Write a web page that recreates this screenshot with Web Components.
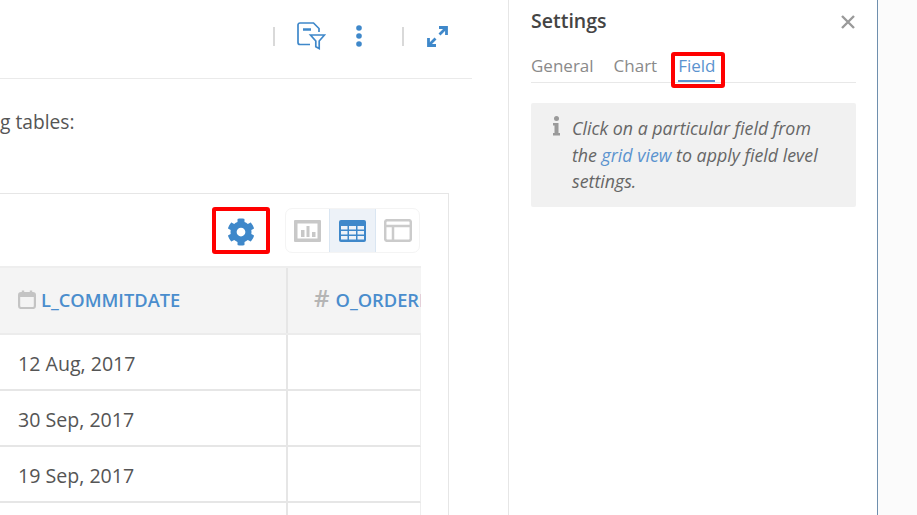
<!doctype html>
<html>
<head>
<meta charset="utf-8">
<style>
	html, body { margin: 0; height: 100%; background: #fff; overflow: hidden }
	body { font-family: "Open Sans", "Liberation Sans", sans-serif; color: #555 }
</style>
</head>
<body>
<app-shell>
	<main-view slot="main">
		<top-bar></top-bar>
		<p-line>g tables:</p-line>
		<data-card>
			<grid-head slot="head" kind="date" name="L_COMMITDATE"></grid-head>
			<grid-head slot="head" kind="num" name="O_ORDERDATE"></grid-head>
			<grid-row slot="rows" value="12 Aug, 2017"></grid-row>
			<grid-row slot="rows" value="30 Sep, 2017"></grid-row>
			<grid-row slot="rows" value="19 Sep, 2017"></grid-row>
			<grid-row slot="rows" value=""></grid-row>
		</data-card>
	</main-view>
	<settings-panel slot="side"></settings-panel>
</app-shell>

<script>
////////////////////////////////////////////////////////////////
const BLUE = '#3f88ca'

const define = ( name, html, init ) => customElements.define( name, class extends HTMLElement {
	constructor() {
		super()
		this.attachShadow( { mode: 'open' } ).innerHTML = html
	}
	connectedCallback() { init && init( this, this.shadowRoot ) }
} )

define( 'app-shell', `
	<style>
		:host { display: flex; width: 917px; height: 515px; overflow: hidden }
		.main { flex: 0 0 508px; border-right: 1px solid #e6e6e6; overflow: hidden }
		.side { flex: 0 0 368px }
		.rest { flex: 1; border-left: 1px solid #6f8fae; background: #fbfbfb }
	</style>
	<div class="main"><slot name="main"></slot></div>
	<div class="side"><slot name="side"></slot></div>
	<div class="rest"></div>
` )

define( 'main-view', `
	<style>:host { display: block; width: 472px; height: 515px }</style>
	<slot></slot>
` )

define( 'top-bar', `
	<style>
		:host { display: flex; align-items: center; justify-content: flex-end; box-sizing: border-box; height: 79px; padding: 0 23px 6px 0; border-bottom: 1px solid #eaeaea }
		i { width: 2px; height: 19px; background: #d9d9d9 }
		svg { display: block; fill: none; stroke: ${ BLUE } }
		.doc { margin-left: 22px }
		.dots { margin: 0 39px 0 29px }
		.arrows { margin-left: 22px }
	</style>
	<i></i>
	<svg class="doc" width="29" height="28" viewBox="0 0 29 28" stroke-width="1.7">
		<path d="M13 22.500H3a2 2 0 0 1-2-2V3a2 2 0 0 1 2-2h13.500l5.500 5.500V10"/>
		<path d="M6 7.500h8" stroke-width="2.500"/>
		<path d="M13.500 13h14l-5.300 6v7.500l-3.400-1.800V19z"/>
	</svg>
	<svg class="dots" width="8" height="24" viewBox="0 0 8 24" style="fill:${ BLUE };stroke:none">
		<circle cx="4" cy="4" r="2.800"/><circle cx="4" cy="12" r="2.800"/><circle cx="4" cy="20" r="2.800"/>
	</svg>
	<i></i>
	<svg class="arrows" width="23" height="23" viewBox="0 0 23 23" stroke-width="2.800">
		<path d="M3.500 19.500L9.500 13.500M13.500 9.500L19.500 3.500"/>
		<path d="M13 2.500h7.500V10M10 20.500H2.500V13"/>
	</svg>
` )

define( 'p-line', `
	<style>:host { display: block; height: 114px; box-sizing: border-box; padding-top: 30px; font-size: 19.200px; line-height: 26px; color: #555 }</style>
	<slot></slot>
` )

define( 'data-card', `
	<style>
		:host { display: block; width: 449px; height: 322px; box-sizing: border-box; border: 1px solid #e6e6e6; border-left: 0; border-bottom: 0 }
		.tools { display: flex; align-items: flex-start; height: 72px; padding: 13px 0 0 212px; box-sizing: border-box }
		.red { box-sizing: border-box; width: 58px; height: 47px; border: 4px solid #f00; border-radius: 3px; display: flex; align-items: center; justify-content: center }
		.red svg { margin-top: 2px }
		.views { display: flex; margin: 1px 0 0 15px; width: 135px; height: 45px; box-sizing: border-box; border: 1px solid #f4f4f4; border-radius: 7px }
		.views span { flex: 1; display: flex; align-items: center; justify-content: center }
		.views .on { background: #edf2f8; border: solid #dae6f2; border-width: 0 1px; flex: 0 0 45px }
		.table { width: 421px; overflow: hidden }
		.head { display: flex; height: 69px; box-sizing: border-box; background: #f4f4f4; border-top: 2px solid #eee; border-bottom: 2px solid #ececec }
		svg { display: block }
	</style>
	<div class="tools">
		<div class="red">
			<svg width="28" height="28" viewBox="0 0 512 512" fill="${ BLUE }"><path d="M487.4 315.7l-42.6-24.6c4.3-23.2 4.3-47 0-70.2l42.6-24.6c4.9-2.8 7.1-8.6 5.500-14-11.100-35.600-30-67.800-54.700-94.600-3.800-4.100-10-5.100-14.800-2.300L380.800 110c-17.900-15.400-38.500-27.300-60.800-35.100V25.800c0-5.600-3.900-10.500-9.400-11.700-36.700-8.200-74.300-7.800-109.200 0-5.500 1.200-9.400 6.100-9.400 11.700V75c-22.200 7.900-42.800 19.800-60.800 35.100L88.700 85.500c-4.900-2.800-11-1.900-14.800 2.300-24.700 26.700-43.600 58.900-54.700 94.600-1.700 5.400.6 11.200 5.500 14L67.300 221c-4.300 23.200-4.300 47 0 70.200l-42.600 24.600c-4.900 2.800-7.100 8.600-5.500 14 11.100 35.600 30 67.800 54.700 94.600 3.800 4.100 10 5.100 14.800 2.300l42.600-24.600c17.900 15.400 38.500 27.300 60.800 35.100v49.200c0 5.600 3.900 10.500 9.400 11.700 36.700 8.200 74.300 7.800 109.200 0 5.500-1.200 9.400-6.100 9.400-11.700v-49.200c22.200-7.900 42.800-19.800 60.800-35.100l42.600 24.600c4.900 2.800 11 1.900 14.800-2.300 24.700-26.700 43.600-58.900 54.700-94.600 1.500-5.500-.7-11.300-5.600-14.100zM256 336c-44.100 0-80-35.900-80-80s35.900-80 80-80 80 35.900 80 80-35.900 80-80 80z"/></svg>
		</div>
		<div class="views">
			<span>
				<svg width="27" height="22" viewBox="0 0 27 22"><path fill="#c8c8c8" fill-rule="evenodd" d="M1 0h25a1 1 0 0 1 1 1v20a1 1 0 0 1-1 1H1a1 1 0 0 1-1-1V1a1 1 0 0 1 1-1zM3.500 3.500v15h20v-15zM7 10h3.500v7H7zM12.500 6h3v11h-3zM18 12h3.500v5H18z"/></svg>
			</span>
			<span class="on">
				<svg width="27" height="22" viewBox="0 0 27 22"><path fill="${ BLUE }" fill-rule="evenodd" d="M2 0h23a2 2 0 0 1 2 2v18a2 2 0 0 1-2 2H2a2 2 0 0 1-2-2V2a2 2 0 0 1 2-2zM2 6v3.500h6.500V6zM10 6v3.500h7V6zM18.500 6v3.500H25V6zM2 11v3.500h6.500V11zM10 11v3.500h7V11zM18.500 11v3.500H25V11zM2 16v3.500h6.500V16zM10 16v3.500h7V16zM18.500 16v3.500H25V16z"/></svg>
			</span>
			<span>
				<svg width="28" height="23" viewBox="0 0 28 23" fill="none" stroke="#cbcbcb" stroke-width="2.500"><rect x="1.200" y="1.200" width="25.600" height="20.600" rx="2"/><path d="M1 7h26M9 7v15"/></svg>
			</span>
		</div>
	</div>
	<div class="table">
		<div class="head"><slot name="head"></slot></div>
		<slot name="rows"></slot>
	</div>
` )

define( 'grid-head', `
	<style>
		:host { display: flex; align-items: center; box-sizing: border-box; padding-bottom: 3px; white-space: nowrap; font-size: 18.300px; font-weight: 600; color: #4a8dcd; overflow: hidden }
		:host([kind=date]) { flex: 0 0 288px; padding-left: 18px; border-right: 2px solid #e6e6e6 }
		:host([kind=num]) { flex: 1 0 133px; padding-left: 26px }
		.hash { font-size: 24px; font-weight: 600; color: #b5b5b5; margin-right: 6px; line-height: 1 }
		svg { display: block; margin-right: 5px }
	</style>
	<span id="icon"></span><span id="name"></span>
`, ( el, root ) => {
	root.getElementById( 'name' ).textContent = el.getAttribute( 'name' )
	root.getElementById( 'icon' ).innerHTML = el.getAttribute( 'kind' ) == 'date'
		? `<svg width="18" height="19" viewBox="0 0 18 19" fill="none" stroke="#c4c4c4" stroke-width="2.200"><rect x="1.100" y="3" width="15.800" height="15" rx="2"/><path d="M1 5.500h16" stroke-width="3"/><path d="M5 0.500v4M13 0.500v4" stroke-width="2.400"/></svg>`
		: `<span class="hash">#</span>`
} )

define( 'grid-row', `
	<style>
		:host { display: flex; height: 56px; box-sizing: border-box; border-bottom: 2px solid #e6e6e6; border-right: 1px solid #eee; font-size: 19.600px; color: #555 }
		span { flex: 0 0 288px; box-sizing: border-box; padding: 16px 0 0 18px; line-height: 26px; border-right: 2px solid #e6e6e6 }
	</style>
	<span id="v"></span>
`, ( el, root ) => root.getElementById( 'v' ).textContent = el.getAttribute( 'value' ) )

define( 'settings-panel', `
	<style>
		:host { display: block; box-sizing: border-box; height: 515px; padding: 0 21px 0 22px }
		.title { display: flex; justify-content: space-between; align-items: center; height: 41px; font-size: 19.500px; font-weight: 600; color: #444 }
		.title svg { margin: 3px 0 0 }
		.tabs { display: flex; height: 42px; box-sizing: border-box; border-bottom: 1px solid #e8e8e8; font-size: 17px; line-height: 24px; color: #8a8a8a; padding-top: 13px }
		.tab { margin-right: 20px }
		.tab + .tab { margin-right: 21px }
		.field { position: relative; color: #5b93cf }
		.field::before { content: ''; position: absolute; left: -7px; right: -10px; top: -2px; height: 36px; box-sizing: border-box; border: 4px solid #f00; border-radius: 3px }
		.field::after { content: ''; position: absolute; left: 0; right: 0; top: 26px; height: 2px; background: #5b93cf }
		.note { display: flex; margin-top: 20px; height: 104px; box-sizing: border-box; background: #f1f1f1; border-radius: 2px; padding: 12px 16px 0 22px }
		.note svg { flex: none; margin: 1px 12px 0 0 }
		.note p { margin: 0; font-size: 17.800px; line-height: 26.500px; font-style: italic; color: #666 }
		a { color: #5b93cf; text-decoration: none }
	</style>
	<div class="title"><span>Settings</span>
		<svg width="16" height="16" viewBox="0 0 16 16" stroke="#9a9a9a" stroke-width="2.400"><path d="M2 2l12 12M14 2L2 14"/></svg>
	</div>
	<div class="tabs">
		<span class="tab">General</span><span class="tab">Chart</span><span class="tab field">Field</span>
	</div>
	<div class="note">
		<svg width="7" height="20" viewBox="0 0 7 20" fill="#9a9a9a"><circle cx="3.500" cy="2.500" r="2.500"/><path d="M0 7h5.500v10H7v2.500H0V17h1.500v-7.500H0z"/></svg>
		<p>Click on a particular field from the <a>grid view</a> to apply field level settings.</p>
	</div>
` )
</script>
</body>
</html>
